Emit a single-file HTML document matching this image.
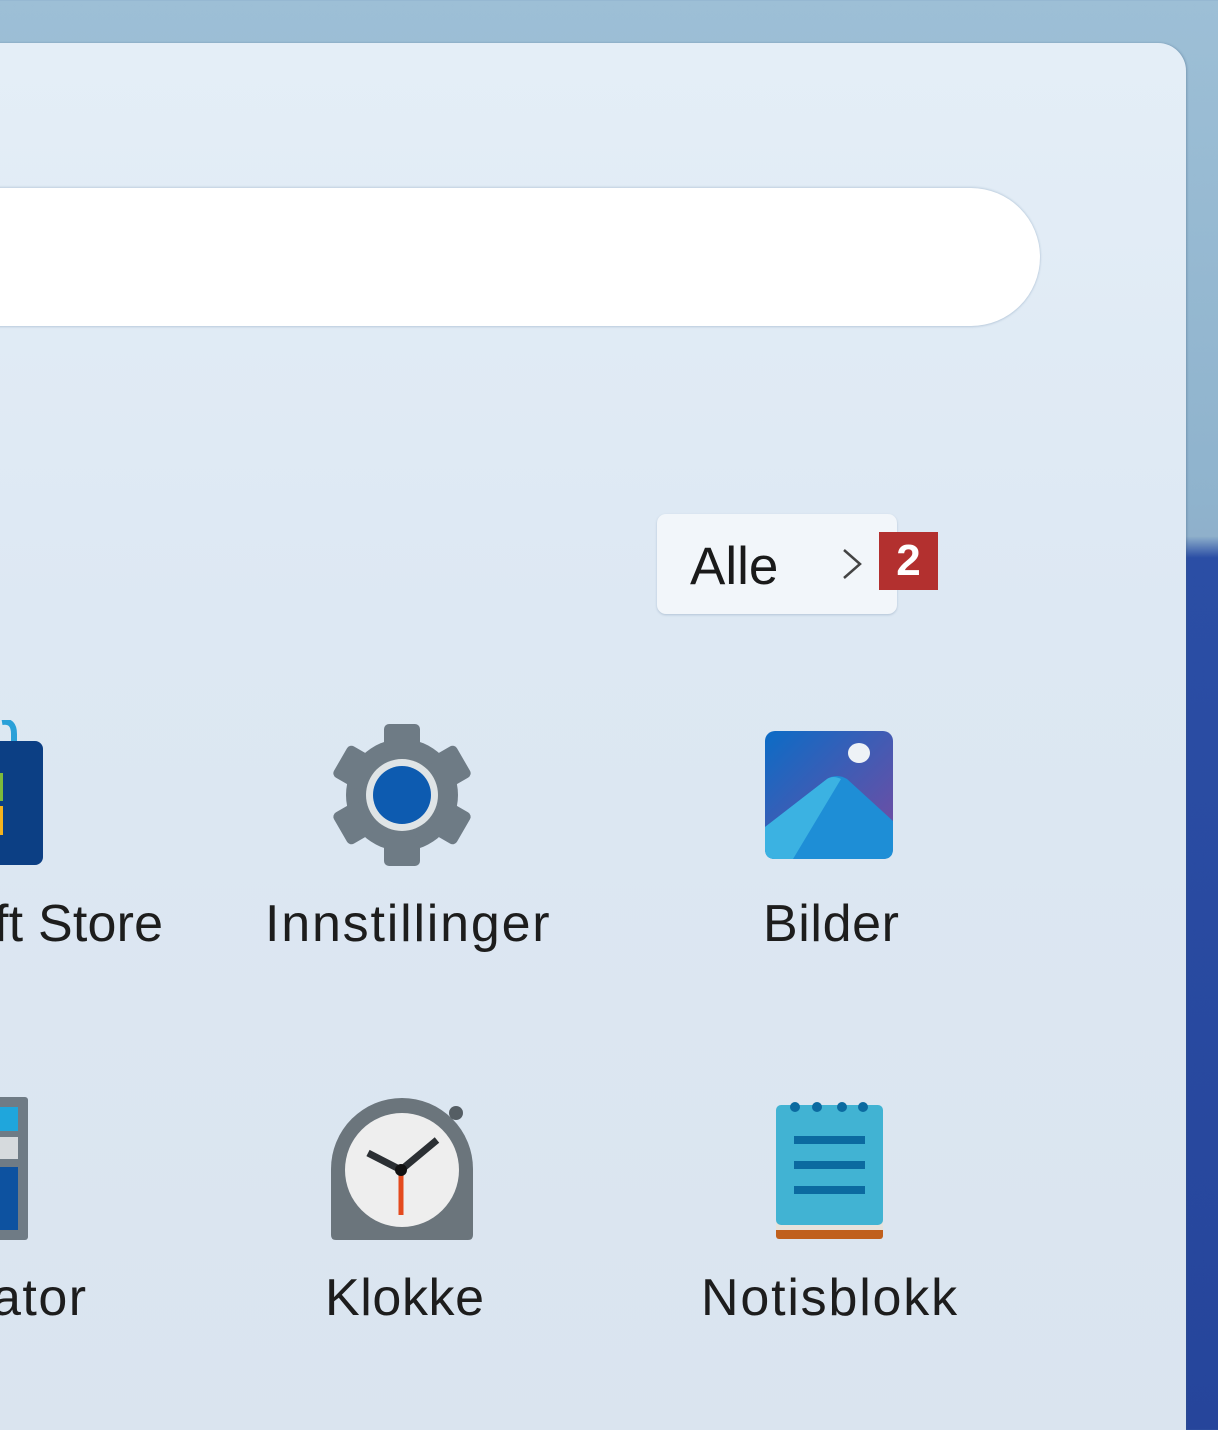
<!DOCTYPE html>
<html><head><meta charset="utf-8"><style>
html,body{margin:0;padding:0;width:1218px;height:1430px;overflow:hidden}
body{position:relative;background:linear-gradient(180deg,#9dbfd6 0%,#8fb3cd 35%,#8fb0cb 37.5%,#2b4ea5 39%,#26459b 100%);font-family:"Liberation Sans",sans-serif}
.panel{position:absolute;left:-30px;top:43px;width:1216px;height:1420px;border-radius:28px;background:linear-gradient(180deg,#e4eef7 0%,#dde8f3 40%,#dae4ef 100%);box-shadow:1px 0 2px rgba(60,90,120,.35)}
.search{position:absolute;left:-80px;top:188px;width:1120px;height:138px;border-radius:69px;background:#fff;box-shadow:0 -1px 2px rgba(120,150,180,.3),0 1px 2px rgba(120,150,180,.35)}
.alle{position:absolute;left:657px;top:514px;width:240px;height:100px;border-radius:9px;background:#f2f6fa;box-shadow:0 1px 2px rgba(100,130,160,.35)}
.alle span{position:absolute;left:33px;top:22px;font-size:53px;color:#1a1a1a;letter-spacing:0px}
.badge{position:absolute;left:879px;top:532px;width:59px;height:58px;background:#b3302f;color:#fff;font-weight:bold;font-size:44px;text-align:center;line-height:58px}
.lbl{position:absolute;font-size:52px;color:#1d1d1d;white-space:nowrap;letter-spacing:0.6px}
svg{position:absolute}
</style></head><body>
<div class="panel"></div>
<div class="search"></div>
<div class="alle"><span>Alle</span>
<svg style="left:183px;top:33px" width="24" height="34" viewBox="0 0 24 34"><path d="M4 3 L20 17 L4 31" fill="none" stroke="#444" stroke-width="2.5"/></svg></div>
<div class="badge">2</div>

<!-- store -->
<svg style="left:0;top:720px" width="50" height="150"><path d="M2 2 Q14 0 14 14 L14 26" fill="none" stroke="#2aa0d8" stroke-width="6"/><rect x="-20" y="21" width="63" height="124" rx="8" fill="#0c3f84"/><rect x="-10" y="53" width="13" height="28" fill="#7dba3b"/><rect x="-10" y="86" width="13" height="29" fill="#f4b31e"/></svg>
<div class="lbl" style="left:-6px;top:894px;letter-spacing:0.2px">ft Store</div>

<!-- gear -->
<svg style="left:330px;top:724px" width="144" height="142" viewBox="-72 -71 144 142">
<g fill="#6e7b85">
<circle r="56"/>
<rect x="-18" y="-71" width="36" height="30" rx="5"/>
<rect x="-18" y="-71" width="36" height="30" rx="5" transform="rotate(60)"/>
<rect x="-18" y="-71" width="36" height="30" rx="5" transform="rotate(120)"/>
<rect x="-18" y="-71" width="36" height="30" rx="5" transform="rotate(180)"/>
<rect x="-18" y="-71" width="36" height="30" rx="5" transform="rotate(240)"/>
<rect x="-18" y="-71" width="36" height="30" rx="5" transform="rotate(300)"/>
</g>
<circle r="36" fill="#dfe4e6"/><circle r="29" fill="#0d5bb0"/></svg>
<div class="lbl" style="left:265px;top:894px;letter-spacing:1.8px">Innstillinger</div>

<!-- photos -->
<svg style="left:765px;top:731px" width="128" height="128" viewBox="0 0 128 128">
<defs><linearGradient id="pg" x1="0" y1="0" x2="1" y2="1"><stop offset="0" stop-color="#0b6cc6"/><stop offset="1" stop-color="#7a4aa0"/></linearGradient></defs>
<rect width="128" height="128" rx="10" fill="url(#pg)"/>
<path d="M0 96 L62 48 Q72 42 82 48 L128 90 L128 118 Q128 128 118 128 L10 128 Q0 128 0 118Z" fill="#1e8ed6"/>
<path d="M0 96 L62 48 Q68 44 76 48 L28 128 L10 128 Q0 128 0 118Z" fill="#3bb2e2"/>
<ellipse cx="94" cy="22" rx="11" ry="10" fill="#eef2f6"/></svg>
<div class="lbl" style="left:763px;top:894px">Bilder</div>

<!-- calculator -->
<svg style="left:0;top:1097px" width="30" height="143"><rect x="-30" y="0" width="58" height="143" rx="3" fill="#6f7b85"/><rect x="-20" y="10" width="38" height="24" fill="#1fa6dc"/><rect x="-20" y="40" width="38" height="22" fill="#d6dadd"/><rect x="-20" y="70" width="38" height="63" fill="#0d52a0"/></svg>
<div class="lbl" style="left:-8px;top:1268px;letter-spacing:1.5px">ator</div>

<!-- clock -->
<svg style="left:331px;top:1098px" width="143" height="143" viewBox="0 0 143 143">
<path d="M0 71 A71 71 0 0 1 142 71 L142 137 Q142 142 137 142 L5 142 Q0 142 0 137Z" fill="#6b757c"/>
<circle cx="125" cy="15" r="7" fill="#555e64"/>
<circle cx="71" cy="72" r="57" fill="#eeeeee"/>
<path d="M37 55 L70 72 L106 42" fill="none" stroke="#2b2f33" stroke-width="7"/>
<path d="M70 74 L70 117" stroke="#e44a1e" stroke-width="5"/>
<circle cx="70" cy="72" r="6" fill="#111"/></svg>
<div class="lbl" style="left:325px;top:1268px">Klokke</div>

<!-- notepad -->
<svg style="left:776px;top:1098px" width="108" height="143" viewBox="0 0 108 143">
<rect x="0" y="128" width="107" height="13" rx="3" fill="#c0601d"/>
<rect x="0" y="120" width="107" height="12" fill="#e6e2dc"/>
<rect x="0" y="7" width="107" height="120" rx="5" fill="#41b3d3"/>
<g fill="#0b6aa0"><circle cx="19" cy="9" r="5"/><circle cx="41" cy="9" r="5"/><circle cx="66" cy="9" r="5"/><circle cx="87" cy="9" r="5"/>
<rect x="18" y="38" width="71" height="8"/><rect x="18" y="63" width="71" height="8"/><rect x="18" y="88" width="71" height="8"/></g></svg>
<div class="lbl" style="left:701px;top:1268px;letter-spacing:1.8px">Notisblokk</div>
</body></html>
